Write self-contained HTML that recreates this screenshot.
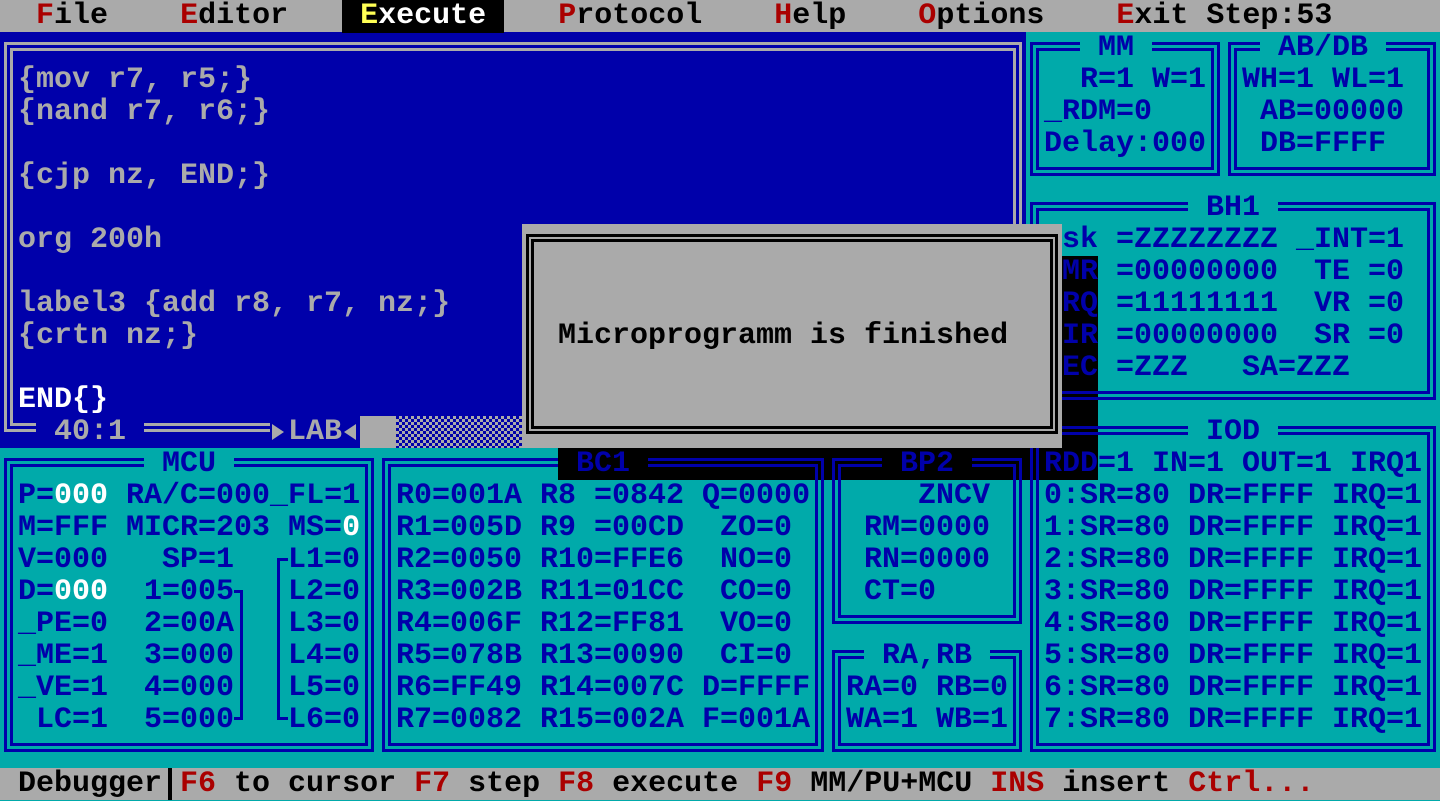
<!DOCTYPE html>
<html><head><meta charset="utf-8"><style>
body{margin:0;width:1440px;height:800px;overflow:hidden;background:#00aaaa;position:relative;font-family:"Liberation Mono","DejaVu Sans Mono",monospace;font-size:30px;font-weight:bold}
.a{position:absolute}
.t{position:absolute;white-space:pre;line-height:32px;height:32px;color:#0000aa}
.b{position:absolute;box-sizing:border-box;border:9px double #0000aa}
.g{color:#aaaaaa}.w{color:#ffffff}.r{color:#aa0000}.k{color:#000}.y{color:#ffff55}
</style></head><body>
<div class="a" style="left:0;top:0;width:1440px;height:32px;background:#aaaaaa"></div>
<div class="a" style="left:0;top:32px;width:1026px;height:416px;background:#0000aa"></div>
<div class="a" style="left:0;top:768px;width:1440px;height:32px;background:#aaaaaa"></div>
<div class="a" style="left:1062px;top:256px;width:36px;height:224px;background:#000"></div>
<div class="a" style="left:558px;top:448px;width:540px;height:32px;background:#000"></div>
<div class="b" style="left:4px;top:42px;width:1018px;height:390px;border-color:#aaaaaa"></div>
<div class="b" style="left:1030px;top:42px;width:190px;height:134px"></div>
<div class="b" style="left:1228px;top:42px;width:208px;height:134px"></div>
<div class="b" style="left:1030px;top:202px;width:406px;height:198px"></div>
<div class="b" style="left:1030px;top:426px;width:406px;height:326px"></div>
<div class="b" style="left:4px;top:458px;width:370px;height:294px"></div>
<div class="b" style="left:382px;top:458px;width:442px;height:294px"></div>
<div class="b" style="left:832px;top:458px;width:190px;height:166px"></div>
<div class="b" style="left:832px;top:650px;width:190px;height:102px"></div>
<div class="a" style="left:240px;top:590px;width:3px;height:130px;background:#0000aa"></div>
<div class="a" style="left:234px;top:590px;width:8px;height:3px;background:#0000aa"></div>
<div class="a" style="left:234px;top:717px;width:8px;height:3px;background:#0000aa"></div>
<div class="a" style="left:277px;top:558px;width:3px;height:162px;background:#0000aa"></div>
<div class="a" style="left:277px;top:558px;width:11px;height:3px;background:#0000aa"></div>
<div class="a" style="left:277px;top:717px;width:11px;height:3px;background:#0000aa"></div>
<div class="t" style="left:1080px;top:32px;background:#00aaaa"> MM </div>
<div class="t" style="left:1260px;top:32px;background:#00aaaa"> AB/DB </div>
<div class="t" style="left:1188px;top:192px;background:#00aaaa"> BH1 </div>
<div class="t" style="left:1188px;top:416px;background:#00aaaa"> IOD </div>
<div class="t" style="left:144px;top:448px;background:#00aaaa"> MCU </div>
<div class="t" style="left:558px;top:448px;background:#000"> BC1 </div>
<div class="t" style="left:882px;top:448px;background:#000"> BP2 </div>
<div class="t" style="left:864px;top:640px;background:#00aaaa"> RA,RB </div>
<div class="t g" style="left:36px;top:416px;background:#0000aa"> 40:1 </div>
<div class="t g" style="left:270px;top:416px;width:90px;background:#0000aa">    </div>
<div class="t g" style="left:288px;top:416px">LAB</div>
<div class="a" style="left:272px;top:424px;width:0;height:0;border-left:12px solid #aaaaaa;border-top:8px solid transparent;border-bottom:8px solid transparent"></div>
<div class="a" style="left:344px;top:424px;width:0;height:0;border-right:12px solid #aaaaaa;border-top:8px solid transparent;border-bottom:8px solid transparent"></div>
<div class="a" style="left:360px;top:416px;width:36px;height:32px;background:#aaaaaa"></div>
<div class="a" style="left:396px;top:416px;width:612px;height:32px;background:repeating-conic-gradient(#aaaaaa 0 25%,#0000aa 0 50%) 0 0/6px 6px"></div>
<div class="t k" style="left:0;top:0">  <span class="r">F</span>ile    <span class="r">E</span>ditor   <span style="background:#000;color:#fff"> <span class="y">E</span>xecute </span>   <span class="r">P</span>rotocol    <span class="r">H</span>elp    <span class="r">O</span>ptions    <span class="r">E</span>xit Step:53</div>
<div class="t g" style="left:18px;top:64px">{mov r7, r5;}</div>
<div class="t g" style="left:18px;top:96px">{nand r7, r6;}</div>
<div class="t g" style="left:18px;top:160px">{cjp nz, END;}</div>
<div class="t g" style="left:18px;top:224px">org 200h</div>
<div class="t g" style="left:18px;top:288px">label3 {add r8, r7, nz;}</div>
<div class="t g" style="left:18px;top:320px">{crtn nz;}</div>
<div class="t w" style="left:18px;top:384px">END{}</div>
<div class="t" style="left:1080px;top:64px">R=1 W=1</div>
<div class="t" style="left:1242px;top:64px">WH=1 WL=1</div>
<div class="t" style="left:1044px;top:96px">_RDM=0</div>
<div class="t" style="left:1260px;top:96px">AB=00000</div>
<div class="t" style="left:1044px;top:128px">Delay:000</div>
<div class="t" style="left:1260px;top:128px">DB=FFFF</div>
<div class="t" style="left:1062px;top:224px">sk =ZZZZZZZZ _INT=1</div>
<div class="t" style="left:1062px;top:256px">MR =00000000  TE =0</div>
<div class="t" style="left:1062px;top:288px">RQ =11111111  VR =0</div>
<div class="t" style="left:1062px;top:320px">IR =00000000  SR =0</div>
<div class="t" style="left:1062px;top:352px">EC =ZZZ   SA=ZZZ</div>
<div class="t" style="left:1044px;top:448px">RDD=1 IN=1 OUT=1 IRQ1</div>
<div class="t" style="left:1044px;top:480px">0:SR=80 DR=FFFF IRQ=1</div>
<div class="t" style="left:1044px;top:512px">1:SR=80 DR=FFFF IRQ=1</div>
<div class="t" style="left:1044px;top:544px">2:SR=80 DR=FFFF IRQ=1</div>
<div class="t" style="left:1044px;top:576px">3:SR=80 DR=FFFF IRQ=1</div>
<div class="t" style="left:1044px;top:608px">4:SR=80 DR=FFFF IRQ=1</div>
<div class="t" style="left:1044px;top:640px">5:SR=80 DR=FFFF IRQ=1</div>
<div class="t" style="left:1044px;top:672px">6:SR=80 DR=FFFF IRQ=1</div>
<div class="t" style="left:1044px;top:704px">7:SR=80 DR=FFFF IRQ=1</div>
<div class="t" style="left:18px;top:480px">P=<span class="w">000</span> RA/C=000_FL=1</div>
<div class="t" style="left:18px;top:512px">M=FFF MICR=203 MS=<span class="w">0</span></div>
<div class="t" style="left:18px;top:544px">V=000   SP=1</div>
<div class="t" style="left:18px;top:576px">D=<span class="w">000</span>  1=005</div>
<div class="t" style="left:18px;top:608px">_PE=0  2=00A</div>
<div class="t" style="left:18px;top:640px">_ME=1  3=000</div>
<div class="t" style="left:18px;top:672px">_VE=1  4=000</div>
<div class="t" style="left:18px;top:704px"> LC=1  5=000</div>
<div class="t" style="left:288px;top:544px">L1=0</div>
<div class="t" style="left:288px;top:576px">L2=0</div>
<div class="t" style="left:288px;top:608px">L3=0</div>
<div class="t" style="left:288px;top:640px">L4=0</div>
<div class="t" style="left:288px;top:672px">L5=0</div>
<div class="t" style="left:288px;top:704px">L6=0</div>
<div class="t" style="left:396px;top:480px">R0=001A R8 =0842 Q=0000</div>
<div class="t" style="left:396px;top:512px">R1=005D R9 =00CD  ZO=0</div>
<div class="t" style="left:396px;top:544px">R2=0050 R10=FFE6  NO=0</div>
<div class="t" style="left:396px;top:576px">R3=002B R11=01CC  CO=0</div>
<div class="t" style="left:396px;top:608px">R4=006F R12=FF81  VO=0</div>
<div class="t" style="left:396px;top:640px">R5=078B R13=0090  CI=0</div>
<div class="t" style="left:396px;top:672px">R6=FF49 R14=007C D=FFFF</div>
<div class="t" style="left:396px;top:704px">R7=0082 R15=002A F=001A</div>
<div class="t" style="left:918px;top:480px">ZNCV</div>
<div class="t" style="left:864px;top:512px">RM=0000</div>
<div class="t" style="left:864px;top:544px">RN=0000</div>
<div class="t" style="left:864px;top:576px">CT=0</div>
<div class="t" style="left:846px;top:672px">RA=0 RB=0</div>
<div class="t" style="left:846px;top:704px">WA=1 WB=1</div>
<div class="t k" style="left:0;top:768px"> Debugger <span class="r">F6</span> to cursor <span class="r">F7</span> step <span class="r">F8</span> execute <span class="r">F9</span> MM/PU+MCU <span class="r">INS</span> insert <span class="r">Ctrl...</span></div>
<div class="a" style="left:168px;top:768px;width:4px;height:32px;background:#000"></div>
<div class="a" style="left:522px;top:224px;width:540px;height:224px;background:#aaaaaa"></div>
<div class="b" style="left:526px;top:234px;width:532px;height:200px;border:8px double #000"></div>
<div class="t k" style="left:558px;top:320px">Microprogramm is finished</div>
</body></html>
